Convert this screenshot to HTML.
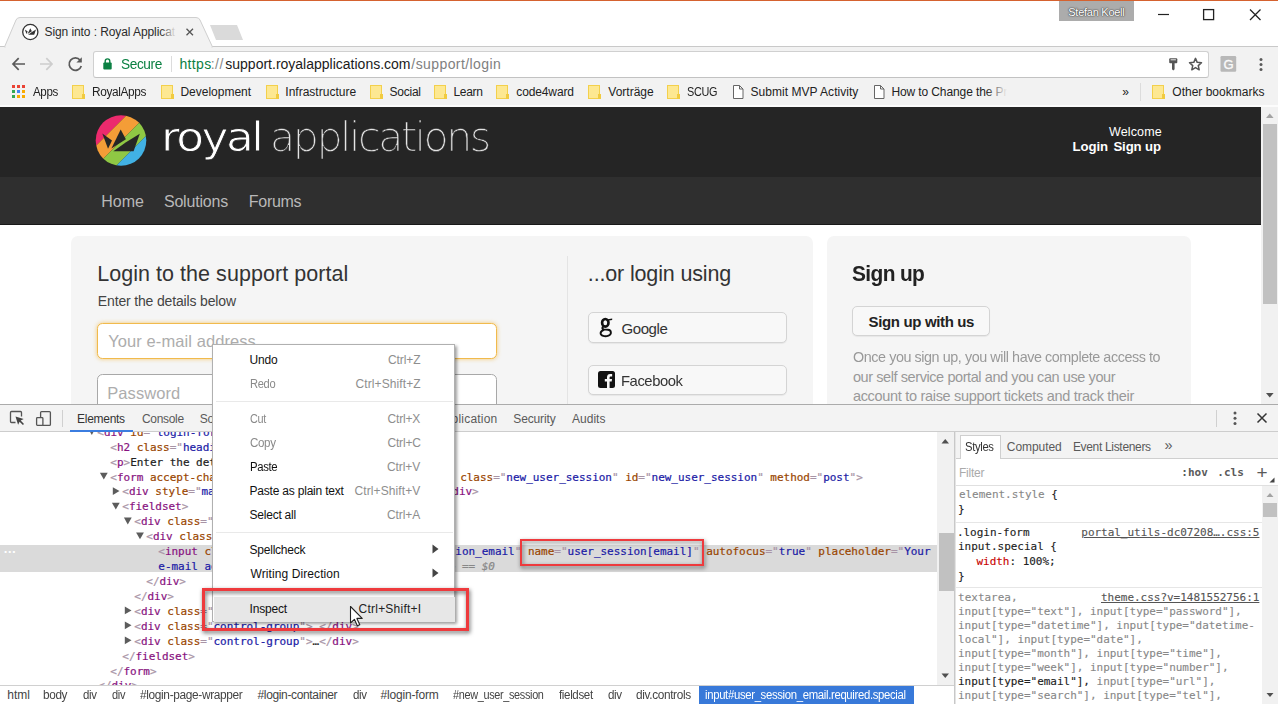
<!DOCTYPE html>
<html><head><meta charset="utf-8"><title>Sign into : Royal Applications</title>
<style>
*{box-sizing:border-box;margin:0;padding:0}
html,body{width:1278px;height:704px;overflow:hidden;background:#fff;font-family:"Liberation Sans",sans-serif}
.layer{position:absolute;left:0;top:0;width:1278px;height:704px;overflow:hidden}
.layer>div,.layer>svg{position:absolute}
.t{position:absolute;white-space:pre;line-height:normal}
.tag{color:#881280}.br{color:#a894a6}.an{color:#994500}.av{color:#1a1aa6}
.folder{width:12px;height:14px;background:#fde892;border:1px solid #f3d04c;top:85px}.folder:after{content:"";position:absolute;right:-2px;bottom:-1px;width:3px;height:5px;background:#f1cb40}
.btn{background:#f8f8f8;border:1px solid #d4d4d4;border-radius:5px;box-shadow:0 1px 1px rgba(0,0,0,.06)}
.panel{background:#f5f5f5;border-radius:7px}
.sep{width:237px !important;height:1px;background:#e9e9e9;margin-left:2px}
</style></head><body>

<!-- ================= PAGE ================= -->
<div class="layer" id="page" style="clip-path:inset(107px 0 300px 0)">
  <div style="left:0;top:107px;width:1261px;height:70.200px;background:#252525"></div>
  <div style="left:0;top:177px;width:1261px;height:48px;background:#2f2f2f;border-bottom:1px solid #191919"></div>
  <!-- logo -->
  <svg style="left:95px;top:115px" width="52" height="52" viewBox="0 0 52 52">
    <defs><clipPath id="lc"><circle cx="26" cy="25.500" r="25.300"/></clipPath></defs>
    <g clip-path="url(#lc)">
      <polygon points="0,0 31.800,0 0,31.800" fill="#ec2a6d"/>
      <polygon points="31.800,0 52,0 0,52 0,31.800" fill="#f49d37"/>
      <polygon points="52,0 52,20 20,52 0,52" fill="#8fc844"/>
      <polygon points="52,20 52,52 20,52" fill="#41b1e4"/>
    </g>
    <polygon points="7.300,18.600 17,25.400 13,33.800" fill="#262626"/>
    <polygon points="25.700,14.500 30.900,24.200 16.400,33.600" fill="#262626"/>
    <polygon points="44.800,18.800 38.600,36.200 18.300,36.200 31,27.300" fill="#262626"/>
  </svg>
  <!-- panels -->
  <div class="panel" style="left:71px;top:236px;width:741.5px;height:200px"></div>
  <div class="panel" style="left:827px;top:236px;width:363.700px;height:200px"></div>
  <div style="left:567px;top:256px;width:1px;height:160px;background:#e4e4e4"></div>
  <!-- inputs -->
  <div style="left:97px;top:323px;width:400px;height:35.500px;background:#fff;border:1.600px solid #f1ba4c;border-radius:5.500px;box-shadow:0 0 4px rgba(243,186,70,.75)"></div>
  <div style="left:97px;top:374px;width:400px;height:35.500px;background:#fff;border:1.400px solid #a8a8a8;border-radius:5.500px"></div>
  <!-- social buttons -->
  <div class="btn" style="left:588px;top:312px;width:198.500px;height:30.500px"></div>
  <div class="btn" style="left:588px;top:364.500px;width:198.500px;height:30.500px"></div>
  <div class="btn" style="left:852.300px;top:306.300px;width:138px;height:30px"></div>
  <svg style="left:599px;top:317px" width="15" height="21" fill="none"><ellipse cx="6.300" cy="5.800" rx="3.200" ry="3.800" stroke="#111" stroke-width="2.600"/><path d="M8.800 2.300L13.200 1.500V3.100L10 3.600z" fill="#111"/><path d="M4.600 9.400C2.600 10.600 3 12.100 5 12.400L9 12.700C12.600 13.100 12.900 17.300 9.500 18.600 6 19.900 1.500 18.900 1.600 16.100 1.700 14.100 4 13.300 5.200 12.700" stroke="#111" stroke-width="1.900"/></svg>
  <!-- facebook icon -->
  <svg style="left:597.5px;top:370.5px" width="17" height="17" viewBox="0 0 17 17"><rect width="17" height="17" rx="2.5" fill="#111"/><path d="M11.6 17V10.6h2.1l.35-2.5H11.6V6.6c0-.75.3-1.2 1.25-1.2h1.3V3.1c-.3-.05-1.1-.1-1.95-.1-1.95 0-3.2 1.15-3.2 3.3v1.8H6.8v2.5H9V17z" fill="#f8f8f8"/></svg>
  <div class="t" style="font-family:'DejaVu Sans','Liberation Sans',sans-serif;font-size:40px;color:#fff;transform:scaleX(1.1367);transform-origin:0 0;left:160.89px;top:114.00px;-webkit-text-stroke:.8px #252525;letter-spacing:-2.2px;">royal</div>
<div class="t" style="font-family:'DejaVu Sans','Liberation Sans',sans-serif;font-size:40px;color:#e4e4e4;font-weight:200;transform:scaleX(1.0289);transform-origin:0 0;left:270.25px;top:114.00px;-webkit-text-stroke:.5px #252525;letter-spacing:-2.4px;">applications</div>
<div class="t" style="font-family:'Liberation Sans',sans-serif;font-size:12.5px;color:#fff;letter-spacing:0.127px;left:1109.04px;top:125.00px;">Welcome</div>
<div class="t" style="font-family:'Liberation Sans',sans-serif;font-size:13.2px;color:#fff;font-weight:700;letter-spacing:-0.057px;left:1072.47px;top:139.30px;">Login</div>
<div class="t" style="font-family:'Liberation Sans',sans-serif;font-size:13.2px;color:#fff;font-weight:700;letter-spacing:-0.112px;left:1113.40px;top:139.30px;">Sign up</div>
<div class="t" style="font-family:'Liberation Sans',sans-serif;font-size:16px;color:#b8b8b8;letter-spacing:-0.019px;left:101.32px;top:193.00px;">Home</div>
<div class="t" style="font-family:'Liberation Sans',sans-serif;font-size:16px;color:#b8b8b8;letter-spacing:-0.194px;left:163.95px;top:193.00px;">Solutions</div>
<div class="t" style="font-family:'Liberation Sans',sans-serif;font-size:16px;color:#b8b8b8;letter-spacing:-0.289px;left:248.82px;top:193.00px;">Forums</div>
<div class="t" style="font-family:'Liberation Sans',sans-serif;font-size:21.5px;color:#333;letter-spacing:0.049px;left:97.14px;top:262.00px;">Login to the support portal</div>
<div class="t" style="font-family:'Liberation Sans',sans-serif;font-size:14px;color:#444;letter-spacing:-0.158px;left:97.86px;top:293.00px;">Enter the details below</div>
<div class="t" style="font-family:'Liberation Sans',sans-serif;font-size:16.5px;color:#adadad;letter-spacing:0.076px;left:108.30px;top:331.80px;">Your e-mail address</div>
<div class="t" style="font-family:'Liberation Sans',sans-serif;font-size:16.5px;color:#adadad;letter-spacing:0.055px;left:107.31px;top:383.50px;">Password</div>
<div class="t" style="font-family:'Liberation Sans',sans-serif;font-size:21.5px;color:#333;letter-spacing:-0.151px;left:587.82px;top:262.00px;">...or login using</div>
<div class="t" style="font-family:'Liberation Sans',sans-serif;font-size:15px;color:#333;letter-spacing:-0.433px;left:621.54px;top:319.70px;">Google</div>
<div class="t" style="font-family:'Liberation Sans',sans-serif;font-size:15px;color:#333;letter-spacing:-0.450px;transform:scaleX(0.9872);transform-origin:0 0;left:621.35px;top:371.60px;">Facebook</div>
<div class="t" style="font-family:'Liberation Sans',sans-serif;font-size:21.5px;color:#222;font-weight:700;letter-spacing:-0.645px;transform:scaleX(0.9726);transform-origin:0 0;left:852.16px;top:262.00px;">Sign up</div>
<div class="t" style="font-family:'Liberation Sans',sans-serif;font-size:15px;color:#222;font-weight:700;letter-spacing:-0.357px;left:868.60px;top:312.80px;">Sign up with us</div>
<div class="t" style="font-family:'Liberation Sans',sans-serif;font-size:14.5px;color:#999;letter-spacing:-0.435px;transform:scaleX(0.9897);transform-origin:0 0;left:852.90px;top:349.20px;">Once you sign up, you will have complete access to</div>
<div class="t" style="font-family:'Liberation Sans',sans-serif;font-size:14.5px;color:#999;letter-spacing:-0.414px;left:852.90px;top:368.60px;">our self service portal and you can use your</div>
<div class="t" style="font-family:'Liberation Sans',sans-serif;font-size:14.5px;color:#999;letter-spacing:-0.305px;left:852.90px;top:388.20px;">account to raise support tickets and track their</div>
</div>
<!-- page scrollbar -->
<div class="layer" style="clip-path:inset(107px 0 300px 0)">
  <div style="left:1261px;top:106px;width:17px;height:299px;background:#f1f1f1"></div>
  <div style="left:1263px;top:124px;width:13.600px;height:180px;background:#c1c1c1"></div>
  <svg style="left:1261px;top:106px" width="17" height="299"><polygon points="5,12 12.600,12 8.800,7.600" fill="#a3a3a3"/><polygon points="5,287 12.600,287 8.800,291.400" fill="#505050"/></svg>
</div>

<!-- ================= CHROME ================= -->
<div class="layer" id="chrome" style="height:107px">
  <div style="left:0;top:0;width:1278px;height:46px;background:#fff"></div>
  <div style="left:0;top:0;width:1278px;height:1.4px;background:#d5622f"></div>
  <div style="left:0;top:46px;width:1278px;height:61px;background:#f2f2f2;border-bottom:2px solid #fcfcfc"></div>
  <!-- tab -->
  <svg style="left:0;top:0" width="300" height="48">
    <line x1="0" y1="46.5" x2="300" y2="46.5" stroke="#c9c9c9"/>
    <polygon points="210,25 237,25 243,40 216,40" fill="#dadada"/>
    <path d="M4.5 47 L16 20 Q17 17.5 20 17.5 L196 17.5 Q199 17.5 200 20 L212.5 47 Z" fill="#f2f2f2" stroke="#cfcfcf" stroke-width="1"/>
    <rect x="5.5" y="46" width="206" height="2" fill="#f2f2f2"/>
    <circle cx="30.3" cy="32" r="7.6" fill="#fff" stroke="#333" stroke-width="1.3"/>
    <g transform="translate(22.600,23.900) scale(.3)" fill="#333"><polygon points="7.300,18.600 17,25.400 13,33.800"/><polygon points="25.700,14.500 30.900,24.200 16.400,33.600"/><polygon points="44.800,18.800 38.600,36.200 18.300,36.200 31,27.300"/></g>
    <path d="M186.5 28.8 L193 35.3 M193 28.8 L186.5 35.3" stroke="#555" stroke-width="1.3"/>
  </svg>
  <div style="left:0;top:46px;width:1278px;height:1px;background:#c9c9c9;clip-path:inset(0 0 0 213px)"></div>
  <!-- user badge + window controls -->
  <div style="left:1059px;top:1px;width:74.500px;height:19.500px;background:#acacac"></div>
  <svg style="left:1140px;top:0" width="138" height="30"><path d="M18 14.5h11" stroke="#222" stroke-width="1.2"/><rect x="63.6" y="9.6" width="10" height="10" fill="none" stroke="#222" stroke-width="1.3"/><path d="M110 9.5l10.5 10.5M120.5 9.5L110 20" stroke="#222" stroke-width="1.3"/></svg>
  <!-- nav buttons -->
  <svg style="left:0;top:50px" width="94" height="28" fill="none">
    <path d="M25 14H13.2M18.7 8.2L13 14l5.7 5.8" stroke="#5a5a5a" stroke-width="1.7"/>
    <path d="M40 14h11.8M46.3 8.2L52 14l-5.7 5.8" stroke="#cdcdcd" stroke-width="1.7"/>
    <path d="M80.2 10.2A6.2 6.2 0 1 0 81.3 16" stroke="#5a5a5a" stroke-width="1.7"/><polygon points="81.8,7.2 81.8,12.6 76.4,12.6" fill="#5a5a5a"/>
  </svg>
  <!-- omnibox -->
  <div style="left:92.800px;top:50.500px;width:1116.700px;height:27px;background:#fff;border:1px solid #d0d0d0;border-bottom-color:#c2c2c2;border-radius:3px"></div>
  <svg style="left:100px;top:56px" width="16" height="16"><rect x="3.3" y="6.6" width="8.4" height="6.8" rx="1" fill="#0b8043"/><path d="M5.2 7V5.2a2.3 2.3 0 0 1 4.6 0V7" fill="none" stroke="#0b8043" stroke-width="1.4"/></svg>
  <div style="left:170.700px;top:56px;width:1px;height:16px;background:#dcdcdc"></div>
  <!-- key, star, ext, menu -->
  <svg style="left:1164px;top:54px" width="110" height="22">
    <rect x="5.200" y="4.200" width="8.100" height="5" rx="1" fill="#555"/><rect x="6.600" y="5.100" width="5.300" height="1.300" fill="#c9c9c9"/>
    <path d="M8 9h2.600v6.200l-1.300 1.200-1.300-1.200z" fill="#555"/>
    <polygon points="31.50,4.40 33.20,8.35 37.49,8.75 34.26,11.60 35.20,15.80 31.50,13.60 27.80,15.80 28.74,11.60 25.51,8.75 29.80,8.35" fill="none" stroke="#555" stroke-width="1.500" stroke-linejoin="round"/>
    <rect x="56.500" y="2.100" width="15.700" height="15.700" rx="1.200" fill="#b8b8b8"/>
    <circle cx="97" cy="5.500" r="1.500" fill="#5a5a5a"/><circle cx="97" cy="10.400" r="1.500" fill="#5a5a5a"/><circle cx="97" cy="15.400" r="1.500" fill="#5a5a5a"/>
  </svg>
  <div class="t" style="left:1223.600px;top:56.600px;font-size:13px;color:#fafafa;-webkit-text-stroke:.35px;font-family:'Liberation Sans',sans-serif">G</div>
  <!-- bookmarks icons -->
  <svg style="left:12px;top:85px" width="14" height="14">
    <rect x="0" y="0" width="3" height="3" fill="#ea4335"/><rect x="5" y="0" width="3" height="3" fill="#ea4335"/><rect x="10" y="0" width="3" height="3" fill="#ea4335"/>
    <rect x="0" y="5" width="3" height="3" fill="#34a853"/><rect x="5" y="5" width="3" height="3" fill="#4285f4"/><rect x="10" y="5" width="3" height="3" fill="#f9ab00"/>
    <rect x="0" y="10" width="3" height="3" fill="#34a853"/><rect x="5" y="10" width="3" height="3" fill="#f9ab00"/><rect x="10" y="10" width="3" height="3" fill="#f9ab00"/>
  </svg>
  <div class="folder" style="left:72px"></div><div class="folder" style="left:160.7px"></div><div class="folder" style="left:266.4px"></div><div class="folder" style="left:370px"></div><div class="folder" style="left:434px"></div><div class="folder" style="left:496px"></div><div class="folder" style="left:588px"></div><div class="folder" style="left:667px"></div><div class="folder" style="left:1152px"></div><svg style="left:731.5px;top:84px" width="13" height="16"><path d="M1.500 1.500h6l3.500 3.500v9.500h-9.500z M7.500 1.500v3.500h3.500" fill="#fff" stroke="#666" stroke-width="1"/></svg><svg style="left:872.5px;top:84px" width="13" height="16"><path d="M1.500 1.500h6l3.500 3.500v9.500h-9.500z M7.500 1.500v3.500h3.500" fill="#fff" stroke="#666" stroke-width="1"/></svg>
  <div style="left:1140px;top:83px;width:1px;height:18px;background:#dcdcdc"></div>
  <div class="t" style="font-family:'Liberation Sans',sans-serif;font-size:12px;color:#2b2b2b;letter-spacing:-0.086px;left:44.50px;top:25.30px;">Sign into : Royal Applicat</div>
<div class="t" style="font-family:'Liberation Sans',sans-serif;font-size:11px;color:#fff;letter-spacing:-0.264px;left:1068.30px;top:5.60px;text-shadow:0 0 1px #444,0 0 1px #444,0 0 2px #555;">Stefan Koell</div>
<div class="t" style="font-family:'Liberation Sans',sans-serif;font-size:14px;color:#0b8043;letter-spacing:-0.420px;transform:scaleX(0.9764);transform-origin:0 0;left:121.46px;top:55.80px;">Secure</div>
<div class="t" style="font-family:'Liberation Sans',sans-serif;font-size:14px;color:#0b8043;letter-spacing:0.382px;left:179.42px;top:55.80px;">https</div>
<div class="t" style="font-family:'Liberation Sans',sans-serif;font-size:14px;color:#8a8a8a;letter-spacing:0.575px;left:210.63px;top:55.80px;">://</div>
<div class="t" style="font-family:'Liberation Sans',sans-serif;font-size:14px;color:#1a1a1a;left:225.30px;top:55.80px;">support.royalapplications.com</div>
<div class="t" style="font-family:'Liberation Sans',sans-serif;font-size:14px;color:#808080;letter-spacing:0.410px;left:411.37px;top:55.80px;">/support/login</div>
<div class="t" style="font-family:'Liberation Sans',sans-serif;font-size:12px;color:#222;letter-spacing:-0.360px;transform:scaleX(0.9644);transform-origin:0 0;left:33.34px;top:84.80px;">Apps</div>
<div class="t" style="font-family:'Liberation Sans',sans-serif;font-size:12px;color:#222;letter-spacing:-0.360px;transform:scaleX(0.9882);transform-origin:0 0;left:92.42px;top:84.80px;">RoyalApps</div>
<div class="t" style="font-family:'Liberation Sans',sans-serif;font-size:12px;color:#222;left:180.41px;top:84.80px;">Development</div>
<div class="t" style="font-family:'Liberation Sans',sans-serif;font-size:12px;color:#222;left:285.37px;top:84.80px;">Infrastructure</div>
<div class="t" style="font-family:'Liberation Sans',sans-serif;font-size:12px;color:#222;letter-spacing:-0.240px;left:389.50px;top:84.80px;">Social</div>
<div class="t" style="font-family:'Liberation Sans',sans-serif;font-size:12px;color:#222;letter-spacing:-0.282px;left:453.41px;top:84.80px;">Learn</div>
<div class="t" style="font-family:'Liberation Sans',sans-serif;font-size:12px;color:#222;letter-spacing:-0.127px;left:516.30px;top:84.80px;">code4ward</div>
<div class="t" style="font-family:'Liberation Sans',sans-serif;font-size:12px;color:#222;letter-spacing:-0.006px;left:608.34px;top:84.80px;">Vorträge</div>
<div class="t" style="font-family:'Liberation Sans',sans-serif;font-size:12px;color:#222;letter-spacing:-0.360px;transform:scaleX(0.9049);transform-origin:0 0;left:686.58px;top:84.80px;">SCUG</div>
<div class="t" style="font-family:'Liberation Sans',sans-serif;font-size:12px;color:#222;letter-spacing:0.038px;left:750.50px;top:84.80px;">Submit MVP Activity</div>
<div class="t" style="font-family:'Liberation Sans',sans-serif;font-size:12px;color:#222;letter-spacing:-0.110px;left:891.41px;top:84.80px;">How to Change the Pr</div>
<div class="t" style="font-family:'Liberation Sans',sans-serif;font-size:12px;color:#222;left:1122.30px;top:84.80px;">»</div>
<div class="t" style="font-family:'Liberation Sans',sans-serif;font-size:12px;color:#222;letter-spacing:0.006px;left:1172.30px;top:84.80px;">Other bookmarks</div>
  <div style="left:160px;top:22px;width:18px;height:22px;background:linear-gradient(90deg,rgba(242,242,242,0),#f2f2f2 92%)"></div>
  <div style="left:986px;top:84px;width:24px;height:17px;background:linear-gradient(90deg,rgba(242,242,242,0),#f2f2f2 88%)"></div>
</div>

<!-- ================= DEVTOOLS ================= -->
<div class="layer" id="dt" style="top:0;clip-path:inset(404px 0 0 0)">
  <div style="left:0;top:404px;width:1278px;height:300px;background:#fff"></div>
  <div style="left:0;top:404px;width:1278px;height:28px;background:#f3f3f3;border-top:1px solid #ababab;border-bottom:1px solid #cdcdcd"></div>
  <div style="left:69.500px;top:430px;width:63.500px;height:2px;background:#3b7de0"></div>
  <!-- toolbar icons -->
  <svg style="left:0;top:405px" width="70" height="27" fill="none">
    <path d="M21.500 11.500V7.500a1 1 0 0 0-1-1h-9a1 1 0 0 0-1 1v9a1 1 0 0 0 1 1h4" stroke="#555" stroke-width="1.300"/>
    <path d="M15.500 11.500l2.600 8.200 1.500-3 3.300 3.300 1.100-1.100-3.300-3.300 3-1.500z" fill="#444"/>
    <rect x="40.600" y="6.600" width="9.800" height="13.800" rx="1" stroke="#555" stroke-width="1.300"/>
    <rect x="36.600" y="12.600" width="6.300" height="7.800" rx=".8" stroke="#555" stroke-width="1.300" fill="#f3f3f3"/>
    <path d="M62.500 5v17" stroke="#d0d0d0"/>
  </svg>
  <svg style="left:1210px;top:405px" width="68" height="27" fill="none">
    <path d="M6.500 5v17" stroke="#d0d0d0"/>
    <circle cx="25" cy="8" r="1.500" fill="#555"/><circle cx="25" cy="13.300" r="1.500" fill="#555"/><circle cx="25" cy="18.600" r="1.500" fill="#555"/>
    <path d="M47.500 8.500l9 9M56.500 8.500l-9 9" stroke="#333" stroke-width="1.500"/>
  </svg>
  <!-- selected row -->
  <div style="left:0;top:544.700px;width:937px;height:27.500px;background:#dadada"></div>
  <!-- tree arrows -->
  <svg style="left:0;top:432px" width="260" height="254" fill="#5c5c5c"><polygon points="87.9,-3.9 95.7,-3.9 91.8,2.9"/><polygon points="99.9,40.8 107.7,40.8 103.8,47.6"/><polygon points="112.8,55.2 112.8,63.0 119.5,59.1"/><polygon points="111.9,70.7 119.7,70.7 115.8,77.5"/><polygon points="123.9,85.6 131.7,85.6 127.8,92.4"/><polygon points="136.1,100.5 143.9,100.5 140.0,107.3"/><polygon points="124.8,174.5 124.8,182.3 131.5,178.4"/><polygon points="124.8,189.4 124.8,197.2 131.5,193.3"/><polygon points="124.8,204.4 124.8,212.2 131.5,208.3"/></svg>
  <!-- elements scrollbar -->
  <div style="left:937px;top:432px;width:17px;height:254px;background:#f1f1f1"></div>
  <div style="left:939px;top:532.500px;width:15px;height:58.500px;background:#c1c1c1"></div>
  <svg style="left:937px;top:432px" width="17" height="254"><polygon points="4.500,11.500 12,11.500 8.250,7" fill="#505050"/><polygon points="4.500,241.500 12,241.500 8.250,246" fill="#505050"/></svg>
  <!-- sidebar splitter -->
  <div style="left:954px;top:432px;width:2px;height:272px;background:#e4e4e4;border-left:1px solid #c8c8c8"></div>
  <!-- styles tab bar -->
  <div style="left:956px;top:432px;width:322px;height:26.500px;background:#f3f3f3;border-bottom:1px solid #cfcfcf"></div>
  <div style="left:959.500px;top:434.500px;width:41px;height:24px;background:#fff;border:1px solid #cfcfcf;border-bottom:none"></div>
  <div style="left:956px;top:485px;width:322px;height:1px;background:#e0e0e0"></div>
  <div style="left:956px;top:522px;width:306px;height:1px;background:#e6e6e6"></div>
  <div style="left:956px;top:587px;width:306px;height:1px;background:#e6e6e6"></div>
  <svg style="left:1268px;top:476px" width="8" height="8"><polygon points="6.500,1.500 6.500,6.500 1.500,6.500" fill="#444"/></svg>
  <!-- styles scrollbar -->
  <div style="left:1262px;top:486px;width:16px;height:218px;background:#f1f1f1"></div>
  <div style="left:1263px;top:503px;width:14px;height:13.700px;background:#c1c1c1"></div>
  <svg style="left:1262px;top:486px" width="16" height="218"><polygon points="4.500,11 11.500,11 8,7" fill="#a3a3a3"/><polygon points="4.500,207 11.500,207 8,211" fill="#505050"/></svg>
  <div style="left:0;top:432px;width:937px;height:253px;overflow:hidden"><div style="position:absolute;left:0;top:-432px;width:937px;height:704px"><div class="t" style="font-family:'DejaVu Sans Mono','Liberation Mono',monospace;font-size:11px;color:#222;left:97.30px;top:425.78px;-webkit-text-stroke:.2px;letter-spacing:-0.024px;"><span class="br">&lt;</span><span class="tag">div</span> <span class="an">id</span><span class="br">="</span><span class="av">login-form</span><span class="br">"</span> <span class="an">class</span><span class="br">="</span><span class="av">login-form span6</span><span class="br">"</span><span class="br">&gt;</span></div>
<div class="t" style="font-family:'DejaVu Sans Mono','Liberation Mono',monospace;font-size:11px;color:#222;left:110.30px;top:440.70px;-webkit-text-stroke:.2px;letter-spacing:-0.024px;"><span class="br">&lt;</span><span class="tag">h2</span> <span class="an">class</span><span class="br">="</span><span class="av">heading</span><span class="br">"</span><span class="br">&gt;</span>Login to the support portal<span class="br">&lt;/</span><span class="tag">h2</span><span class="br">&gt;</span></div>
<div class="t" style="font-family:'DejaVu Sans Mono','Liberation Mono',monospace;font-size:11px;color:#222;left:110.30px;top:455.62px;-webkit-text-stroke:.2px;letter-spacing:-0.024px;"><span class="br">&lt;</span><span class="tag">p</span><span class="br">&gt;</span>Enter the details below<span class="br">&lt;/</span><span class="tag">p</span><span class="br">&gt;</span></div>
<div class="t" style="font-family:'DejaVu Sans Mono','Liberation Mono',monospace;font-size:11px;color:#222;left:110.30px;top:470.54px;-webkit-text-stroke:.2px;letter-spacing:-0.024px;"><span class="br">&lt;</span><span class="tag">form</span> <span class="an">accept-charset</span><span class="br">="</span><span class="av">UTF-8</span><span class="br">"</span> <span class="an">action</span><span class="br">="</span><span class="av">/support/login</span><span class="br">"</span> <span class="an">class</span><span class="br">="</span><span class="av">new_user_session</span><span class="br">"</span> <span class="an">id</span><span class="br">="</span><span class="av">new_user_session</span><span class="br">"</span> <span class="an">method</span><span class="br">="</span><span class="av">post</span><span class="br">"</span><span class="br">&gt;</span></div>
<div class="t" style="font-family:'DejaVu Sans Mono','Liberation Mono',monospace;font-size:11px;color:#222;left:122.30px;top:485.46px;-webkit-text-stroke:.2px;letter-spacing:-0.024px;"><span class="br">&lt;</span><span class="tag">div</span> <span class="an">style</span><span class="br">="</span><span class="av">margin:0;padding:0;display:inline</span><span class="br">"</span><span class="br">&gt;</span>…<span class="br">&lt;/</span><span class="tag">div</span><span class="br">&gt;</span></div>
<div class="t" style="font-family:'DejaVu Sans Mono','Liberation Mono',monospace;font-size:11px;color:#222;left:122.30px;top:500.38px;-webkit-text-stroke:.2px;letter-spacing:-0.024px;"><span class="br">&lt;</span><span class="tag">fieldset</span><span class="br">&gt;</span></div>
<div class="t" style="font-family:'DejaVu Sans Mono','Liberation Mono',monospace;font-size:11px;color:#222;left:134.30px;top:515.30px;-webkit-text-stroke:.2px;letter-spacing:-0.024px;"><span class="br">&lt;</span><span class="tag">div</span> <span class="an">class</span><span class="br">="</span><span class="av">control-group</span><span class="br">"</span><span class="br">&gt;</span></div>
<div class="t" style="font-family:'DejaVu Sans Mono','Liberation Mono',monospace;font-size:11px;color:#222;left:146.30px;top:530.22px;-webkit-text-stroke:.2px;letter-spacing:-0.024px;"><span class="br">&lt;</span><span class="tag">div</span> <span class="an">class</span><span class="br">="</span><span class="av">controls</span><span class="br">"</span><span class="br">&gt;</span></div>
<div class="t" style="font-family:'DejaVu Sans Mono','Liberation Mono',monospace;font-size:11px;color:#222;left:158.30px;top:545.14px;-webkit-text-stroke:.2px;letter-spacing:-0.024px;"><span class="br">&lt;</span><span class="tag">input</span> <span class="an">class</span><span class="br">="</span><span class="av">required special</span><span class="br">"</span> <span class="an">id</span><span class="br">="</span><span class="av">user_session_email</span><span class="br">"</span> <span class="an">name</span><span class="br">="</span><span class="av">user_session[email]</span><span class="br">"</span> <span class="an">autofocus</span><span class="br">="</span><span class="av">true</span><span class="br">"</span> <span class="an">placeholder</span><span class="br">="</span><span class="av">Your</span></div>
<div class="t" style="font-family:'DejaVu Sans Mono','Liberation Mono',monospace;font-size:11px;color:#222;left:158.30px;top:560.06px;-webkit-text-stroke:.2px;letter-spacing:-0.024px;"><span class="av">e-mail address</span><span class="br">"</span> <span class="an">size</span><span class="br">="</span><span class="av">30</span><span class="br">"</span> <span class="an">type</span><span class="br">="</span><span class="av">email</span><span class="br">"</span> <span class="an">value</span><span class="br">&gt;</span><span style="color:#888;font-style:italic"> == $0</span></div>
<div class="t" style="font-family:'DejaVu Sans Mono','Liberation Mono',monospace;font-size:11px;color:#222;left:146.30px;top:574.98px;-webkit-text-stroke:.2px;letter-spacing:-0.024px;"><span class="br">&lt;/</span><span class="tag">div</span><span class="br">&gt;</span></div>
<div class="t" style="font-family:'DejaVu Sans Mono','Liberation Mono',monospace;font-size:11px;color:#222;left:134.30px;top:589.90px;-webkit-text-stroke:.2px;letter-spacing:-0.024px;"><span class="br">&lt;/</span><span class="tag">div</span><span class="br">&gt;</span></div>
<div class="t" style="font-family:'DejaVu Sans Mono','Liberation Mono',monospace;font-size:11px;color:#222;left:134.30px;top:604.82px;-webkit-text-stroke:.2px;letter-spacing:-0.024px;"><span class="br">&lt;</span><span class="tag">div</span> <span class="an">class</span><span class="br">="</span><span class="av">control-group</span><span class="br">"</span><span class="br">&gt;</span>…<span class="br">&lt;/</span><span class="tag">div</span><span class="br">&gt;</span></div>
<div class="t" style="font-family:'DejaVu Sans Mono','Liberation Mono',monospace;font-size:11px;color:#222;left:134.30px;top:619.74px;-webkit-text-stroke:.2px;letter-spacing:-0.024px;"><span class="br">&lt;</span><span class="tag">div</span> <span class="an">class</span><span class="br">="</span><span class="av">control-group</span><span class="br">"</span><span class="br">&gt;</span>…<span class="br">&lt;/</span><span class="tag">div</span><span class="br">&gt;</span></div>
<div class="t" style="font-family:'DejaVu Sans Mono','Liberation Mono',monospace;font-size:11px;color:#222;left:134.30px;top:634.66px;-webkit-text-stroke:.2px;letter-spacing:-0.024px;"><span class="br">&lt;</span><span class="tag">div</span> <span class="an">class</span><span class="br">="</span><span class="av">control-group</span><span class="br">"</span><span class="br">&gt;</span>…<span class="br">&lt;/</span><span class="tag">div</span><span class="br">&gt;</span></div>
<div class="t" style="font-family:'DejaVu Sans Mono','Liberation Mono',monospace;font-size:11px;color:#222;left:122.30px;top:649.58px;-webkit-text-stroke:.2px;letter-spacing:-0.024px;"><span class="br">&lt;/</span><span class="tag">fieldset</span><span class="br">&gt;</span></div>
<div class="t" style="font-family:'DejaVu Sans Mono','Liberation Mono',monospace;font-size:11px;color:#222;left:110.30px;top:664.50px;-webkit-text-stroke:.2px;letter-spacing:-0.024px;"><span class="br">&lt;/</span><span class="tag">form</span><span class="br">&gt;</span></div>
<div class="t" style="font-family:'DejaVu Sans Mono','Liberation Mono',monospace;font-size:11px;color:#222;left:98.30px;top:679.42px;-webkit-text-stroke:.2px;letter-spacing:-0.024px;"><span class="br">&lt;/</span><span class="tag">div</span><span class="br">&gt;</span></div>
<div class="t" style="font-family:'Liberation Sans',sans-serif;font-size:13px;color:#fff;font-weight:700;left:3.31px;top:540.50px;">…</div></div></div>
  <!-- breadcrumb bar -->
  <div style="left:0;top:685px;width:954px;height:19px;background:#fff;border-top:1px solid #d0d0d0"></div>
  <div style="left:699px;top:686px;width:215px;height:18px;background:#3879d9"></div>
  <div class="t" style="font-family:'Liberation Sans',sans-serif;font-size:12px;color:#333;letter-spacing:-0.289px;left:77.11px;top:412.00px;">Elements</div>
<div class="t" style="font-family:'Liberation Sans',sans-serif;font-size:12px;color:#5a5a5a;letter-spacing:-0.317px;left:142.00px;top:412.00px;">Console</div>
<div class="t" style="font-family:'Liberation Sans',sans-serif;font-size:12px;color:#5a5a5a;letter-spacing:-0.101px;left:199.70px;top:412.00px;">Sources</div>
<div class="t" style="font-family:'Liberation Sans',sans-serif;font-size:12px;color:#5a5a5a;letter-spacing:0.405px;left:258.61px;top:412.00px;">Network</div>
<div class="t" style="font-family:'Liberation Sans',sans-serif;font-size:12px;color:#5a5a5a;letter-spacing:-0.062px;left:321.54px;top:412.00px;">Timeline</div>
<div class="t" style="font-family:'Liberation Sans',sans-serif;font-size:12px;color:#5a5a5a;letter-spacing:-0.217px;left:381.61px;top:412.00px;">Profiles</div>
<div class="t" style="font-family:'Liberation Sans',sans-serif;font-size:12px;color:#5a5a5a;letter-spacing:0.195px;left:436.54px;top:412.00px;">Application</div>
<div class="t" style="font-family:'Liberation Sans',sans-serif;font-size:12px;color:#5a5a5a;letter-spacing:-0.131px;left:513.30px;top:412.00px;">Security</div>
<div class="t" style="font-family:'Liberation Sans',sans-serif;font-size:12px;color:#5a5a5a;left:572.04px;top:412.00px;">Audits</div>
<div class="t" style="font-family:'Liberation Sans',sans-serif;font-size:12px;color:#444;left:7.21px;top:688.00px;">html</div>
<div class="t" style="font-family:'Liberation Sans',sans-serif;font-size:12px;color:#444;letter-spacing:-0.360px;transform:scaleX(0.9813);transform-origin:0 0;left:43.25px;top:688.00px;">body</div>
<div class="t" style="font-family:'Liberation Sans',sans-serif;font-size:12px;color:#444;letter-spacing:-0.360px;transform:scaleX(0.9536);transform-origin:0 0;left:83.00px;top:688.00px;">div</div>
<div class="t" style="font-family:'Liberation Sans',sans-serif;font-size:12px;color:#444;letter-spacing:-0.360px;transform:scaleX(0.9190);transform-origin:0 0;left:111.50px;top:688.00px;">div</div>
<div class="t" style="font-family:'Liberation Sans',sans-serif;font-size:12px;color:#444;letter-spacing:-0.360px;transform:scaleX(0.9920);transform-origin:0 0;left:140.04px;top:688.00px;">#login-page-wrapper</div>
<div class="t" style="font-family:'Liberation Sans',sans-serif;font-size:12px;color:#444;letter-spacing:-0.356px;left:257.54px;top:688.00px;">#login-container</div>
<div class="t" style="font-family:'Liberation Sans',sans-serif;font-size:12px;color:#444;letter-spacing:-0.360px;transform:scaleX(0.9605);transform-origin:0 0;left:352.50px;top:688.00px;">div</div>
<div class="t" style="font-family:'Liberation Sans',sans-serif;font-size:12px;color:#444;letter-spacing:-0.174px;left:380.54px;top:688.00px;">#login-form</div>
<div class="t" style="font-family:'Liberation Sans',sans-serif;font-size:12px;color:#444;letter-spacing:-0.360px;transform:scaleX(0.9064);transform-origin:0 0;left:453.13px;top:688.00px;">#new_user_session</div>
<div class="t" style="font-family:'Liberation Sans',sans-serif;font-size:12px;color:#444;letter-spacing:-0.360px;transform:scaleX(0.9620);transform-origin:0 0;left:558.53px;top:688.00px;">fieldset</div>
<div class="t" style="font-family:'Liberation Sans',sans-serif;font-size:12px;color:#444;letter-spacing:-0.360px;transform:scaleX(0.9674);transform-origin:0 0;left:607.80px;top:688.00px;">div</div>
<div class="t" style="font-family:'Liberation Sans',sans-serif;font-size:12px;color:#444;letter-spacing:-0.360px;transform:scaleX(0.9867);transform-origin:0 0;left:636.00px;top:688.00px;">div.controls</div>
<div class="t" style="font-family:'Liberation Sans',sans-serif;font-size:12px;color:#fff;letter-spacing:-0.360px;transform:scaleX(0.9465);transform-origin:0 0;left:705.37px;top:688.00px;">input#user_session_email.required.special</div>
<div class="t" style="font-family:'Liberation Sans',sans-serif;font-size:12px;color:#333;letter-spacing:-0.360px;transform:scaleX(0.9375);transform-origin:0 0;left:965.15px;top:440.00px;">Styles</div>
<div class="t" style="font-family:'Liberation Sans',sans-serif;font-size:12px;color:#5a5a5a;letter-spacing:-0.062px;left:1006.80px;top:440.00px;">Computed</div>
<div class="t" style="font-family:'Liberation Sans',sans-serif;font-size:12px;color:#5a5a5a;letter-spacing:-0.322px;left:1072.91px;top:440.00px;">Event Listeners</div>
<div class="t" style="font-family:'Liberation Sans',sans-serif;font-size:14.5px;color:#5a5a5a;left:1164.50px;top:436.60px;">»</div>
<div class="t" style="font-family:'Liberation Sans',sans-serif;font-size:12px;color:#aaa;letter-spacing:-0.207px;left:958.91px;top:465.70px;">Filter</div>
<div class="t" style="font-family:'DejaVu Sans Mono','Liberation Mono',monospace;font-size:11px;color:#5a5a5a;font-weight:700;letter-spacing:0.005px;left:1181.31px;top:466.00px;">:hov</div>
<div class="t" style="font-family:'DejaVu Sans Mono','Liberation Mono',monospace;font-size:11px;color:#5a5a5a;font-weight:700;letter-spacing:0.027px;left:1217.31px;top:466.00px;">.cls</div>
<div class="t" style="font-family:'Liberation Sans',sans-serif;font-size:19px;color:#5a5a5a;left:1256.45px;top:462.00px;">+</div>
<div class="t" style="font-family:'DejaVu Sans Mono','Liberation Mono',monospace;font-size:11px;color:#222;left:958.90px;top:488.40px;-webkit-text-stroke:.12px;letter-spacing:-0.024px;"><span style="color:#888">element.style</span> {</div>
<div class="t" style="font-family:'DejaVu Sans Mono','Liberation Mono',monospace;font-size:11px;color:#222;left:957.94px;top:503.40px;-webkit-text-stroke:.12px;letter-spacing:-0.024px;">}</div>
<div class="t" style="font-family:'DejaVu Sans Mono','Liberation Mono',monospace;font-size:11px;color:#222;left:956.90px;top:526.00px;-webkit-text-stroke:.12px;letter-spacing:-0.024px;">.login-form</div>
<div class="t" style="font-family:'DejaVu Sans Mono','Liberation Mono',monospace;font-size:11px;color:#555;left:1081.29px;top:526.00px;-webkit-text-stroke:.12px;letter-spacing:-0.024px;"><span style="text-decoration:underline">portal_utils-dc07208….css:5</span></div>
<div class="t" style="font-family:'DejaVu Sans Mono','Liberation Mono',monospace;font-size:11px;color:#222;left:957.99px;top:540.30px;-webkit-text-stroke:.12px;letter-spacing:-0.024px;">input.special {</div>
<div class="t" style="font-family:'DejaVu Sans Mono','Liberation Mono',monospace;font-size:11px;color:#222;left:976.47px;top:555.30px;-webkit-text-stroke:.12px;letter-spacing:-0.024px;"><span style="color:#c80000">width</span>: 100%;</div>
<div class="t" style="font-family:'DejaVu Sans Mono','Liberation Mono',monospace;font-size:11px;color:#222;left:957.94px;top:569.50px;-webkit-text-stroke:.12px;letter-spacing:-0.024px;">}</div>
<div class="t" style="font-family:'DejaVu Sans Mono','Liberation Mono',monospace;font-size:11px;color:#888;left:958.12px;top:591.00px;-webkit-text-stroke:.12px;letter-spacing:-0.024px;">textarea,</div>
<div class="t" style="font-family:'DejaVu Sans Mono','Liberation Mono',monospace;font-size:11px;color:#555;left:1101.00px;top:591.00px;-webkit-text-stroke:.12px;letter-spacing:-0.024px;"><span style="text-decoration:underline">theme.css?v=1481552756:1</span></div>
<div class="t" style="font-family:'DejaVu Sans Mono','Liberation Mono',monospace;font-size:11px;color:#888;left:957.99px;top:605.00px;-webkit-text-stroke:.12px;letter-spacing:-0.024px;">input[type=&quot;text&quot;], input[type=&quot;password&quot;],</div>
<div class="t" style="font-family:'DejaVu Sans Mono','Liberation Mono',monospace;font-size:11px;color:#888;left:957.99px;top:618.95px;-webkit-text-stroke:.12px;letter-spacing:-0.024px;">input[type=&quot;datetime&quot;], input[type=&quot;datetime-</div>
<div class="t" style="font-family:'DejaVu Sans Mono','Liberation Mono',monospace;font-size:11px;color:#888;left:958.04px;top:632.90px;-webkit-text-stroke:.12px;letter-spacing:-0.024px;">local&quot;], input[type=&quot;date&quot;],</div>
<div class="t" style="font-family:'DejaVu Sans Mono','Liberation Mono',monospace;font-size:11px;color:#888;left:957.99px;top:646.85px;-webkit-text-stroke:.12px;letter-spacing:-0.024px;">input[type=&quot;month&quot;], input[type=&quot;time&quot;],</div>
<div class="t" style="font-family:'DejaVu Sans Mono','Liberation Mono',monospace;font-size:11px;color:#888;left:957.99px;top:660.80px;-webkit-text-stroke:.12px;letter-spacing:-0.024px;">input[type=&quot;week&quot;], input[type=&quot;number&quot;],</div>
<div class="t" style="font-family:'DejaVu Sans Mono','Liberation Mono',monospace;font-size:11px;color:#888;left:957.99px;top:674.75px;-webkit-text-stroke:.12px;letter-spacing:-0.024px;"><span style="color:#222">input[type="email"],</span> input[type="url"],</div>
<div class="t" style="font-family:'DejaVu Sans Mono','Liberation Mono',monospace;font-size:11px;color:#888;left:957.99px;top:688.70px;-webkit-text-stroke:.12px;letter-spacing:-0.024px;">input[type=&quot;search&quot;], input[type=&quot;tel&quot;],</div>
</div>

<!-- ================= CONTEXT MENU ================= -->
<div class="layer" id="menu">
  <div style="left:212.200px;top:343.800px;width:243.300px;height:278.400px;background:#fff;border:1px solid #b0b0b0;box-shadow:2px 2px 3px rgba(0,0,0,.38)"></div>
  <div style="left:213.500px;top:596.500px;width:241px;height:25px;background:#e7e7e7"></div>
  <div class="sep" style="left:213.500px;top:400.500px"></div>
  <div class="sep" style="left:213.500px;top:531.500px"></div>
  <div class="sep" style="left:213.500px;top:590px"></div>
  <svg style="left:430px;top:540px" width="12" height="50" fill="#444"><polygon points="2.500,4.500 2.500,13.500 8.500,9"/><polygon points="2.500,28.500 2.500,37.500 8.500,33"/></svg>
  <div class="t" style="font-family:'Liberation Sans',sans-serif;font-size:12px;color:#111;letter-spacing:-0.183px;left:249.55px;top:353.00px;">Undo</div>
<div class="t" style="font-family:'Liberation Sans',sans-serif;font-size:12px;color:#8e8e8e;letter-spacing:-0.092px;left:388.00px;top:353.00px;">Ctrl+Z</div>
<div class="t" style="font-family:'Liberation Sans',sans-serif;font-size:12px;color:#8a8a8a;letter-spacing:-0.360px;transform:scaleX(0.9285);transform-origin:0 0;left:249.58px;top:376.70px;">Redo</div>
<div class="t" style="font-family:'Liberation Sans',sans-serif;font-size:12px;color:#8e8e8e;letter-spacing:0.095px;left:355.50px;top:376.70px;">Ctrl+Shift+Z</div>
<div class="t" style="font-family:'Liberation Sans',sans-serif;font-size:12px;color:#8a8a8a;letter-spacing:-0.360px;transform:scaleX(0.9075);transform-origin:0 0;left:250.40px;top:411.90px;">Cut</div>
<div class="t" style="font-family:'Liberation Sans',sans-serif;font-size:12px;color:#8e8e8e;letter-spacing:-0.181px;left:387.50px;top:411.90px;">Ctrl+X</div>
<div class="t" style="font-family:'Liberation Sans',sans-serif;font-size:12px;color:#8a8a8a;letter-spacing:-0.360px;transform:scaleX(0.9657);transform-origin:0 0;left:250.40px;top:436.30px;">Copy</div>
<div class="t" style="font-family:'Liberation Sans',sans-serif;font-size:12px;color:#8e8e8e;letter-spacing:-0.190px;left:387.50px;top:436.30px;">Ctrl+C</div>
<div class="t" style="font-family:'Liberation Sans',sans-serif;font-size:12px;color:#111;letter-spacing:-0.360px;transform:scaleX(0.9451);transform-origin:0 0;left:249.56px;top:460.20px;">Paste</div>
<div class="t" style="font-family:'Liberation Sans',sans-serif;font-size:12px;color:#8e8e8e;letter-spacing:-0.085px;left:387.00px;top:460.20px;">Ctrl+V</div>
<div class="t" style="font-family:'Liberation Sans',sans-serif;font-size:12px;color:#111;letter-spacing:-0.203px;left:249.51px;top:484.00px;">Paste as plain text</div>
<div class="t" style="font-family:'Liberation Sans',sans-serif;font-size:12px;color:#8e8e8e;letter-spacing:0.098px;left:354.50px;top:484.00px;">Ctrl+Shift+V</div>
<div class="t" style="font-family:'Liberation Sans',sans-serif;font-size:12px;color:#111;letter-spacing:-0.245px;left:249.60px;top:508.00px;">Select all</div>
<div class="t" style="font-family:'Liberation Sans',sans-serif;font-size:12px;color:#8e8e8e;letter-spacing:-0.085px;left:387.00px;top:508.00px;">Ctrl+A</div>
<div class="t" style="font-family:'Liberation Sans',sans-serif;font-size:12px;color:#111;letter-spacing:-0.239px;left:249.60px;top:542.80px;">Spellcheck</div>
<div class="t" style="font-family:'Liberation Sans',sans-serif;font-size:12px;color:#111;letter-spacing:0.096px;left:250.46px;top:566.60px;">Writing Direction</div>
<div class="t" style="font-family:'Liberation Sans',sans-serif;font-size:12px;color:#111;letter-spacing:-0.162px;left:249.47px;top:601.80px;">Inspect</div>
<div class="t" style="font-family:'Liberation Sans',sans-serif;font-size:12px;color:#222;letter-spacing:0.222px;left:358.60px;top:601.80px;">Ctrl+Shift+I</div>
</div>

<!-- ================= ANNOTATIONS ================= -->
<div class="layer" id="ann">
  <div style="left:519.500px;top:539px;width:184px;height:27px;border:2.600px solid #ee3a3d;filter:drop-shadow(1.800px 2.800px 2.200px rgba(0,0,0,.6))"></div>
  <div style="left:202px;top:588.200px;width:267.200px;height:42.400px;border:3px solid #ee3a3d;filter:drop-shadow(1.800px 2.800px 2.200px rgba(0,0,0,.6))"></div>
  <svg style="left:349px;top:605px" width="16" height="24"><path d="M1.500 1.500v16.500l3.900-3.700 2.900 6.500 2.500-1.100-2.900-6.300h5.300z" fill="#fff" stroke="#222" stroke-width="1.100" stroke-linejoin="round"/></svg>
</div>
</body></html>
